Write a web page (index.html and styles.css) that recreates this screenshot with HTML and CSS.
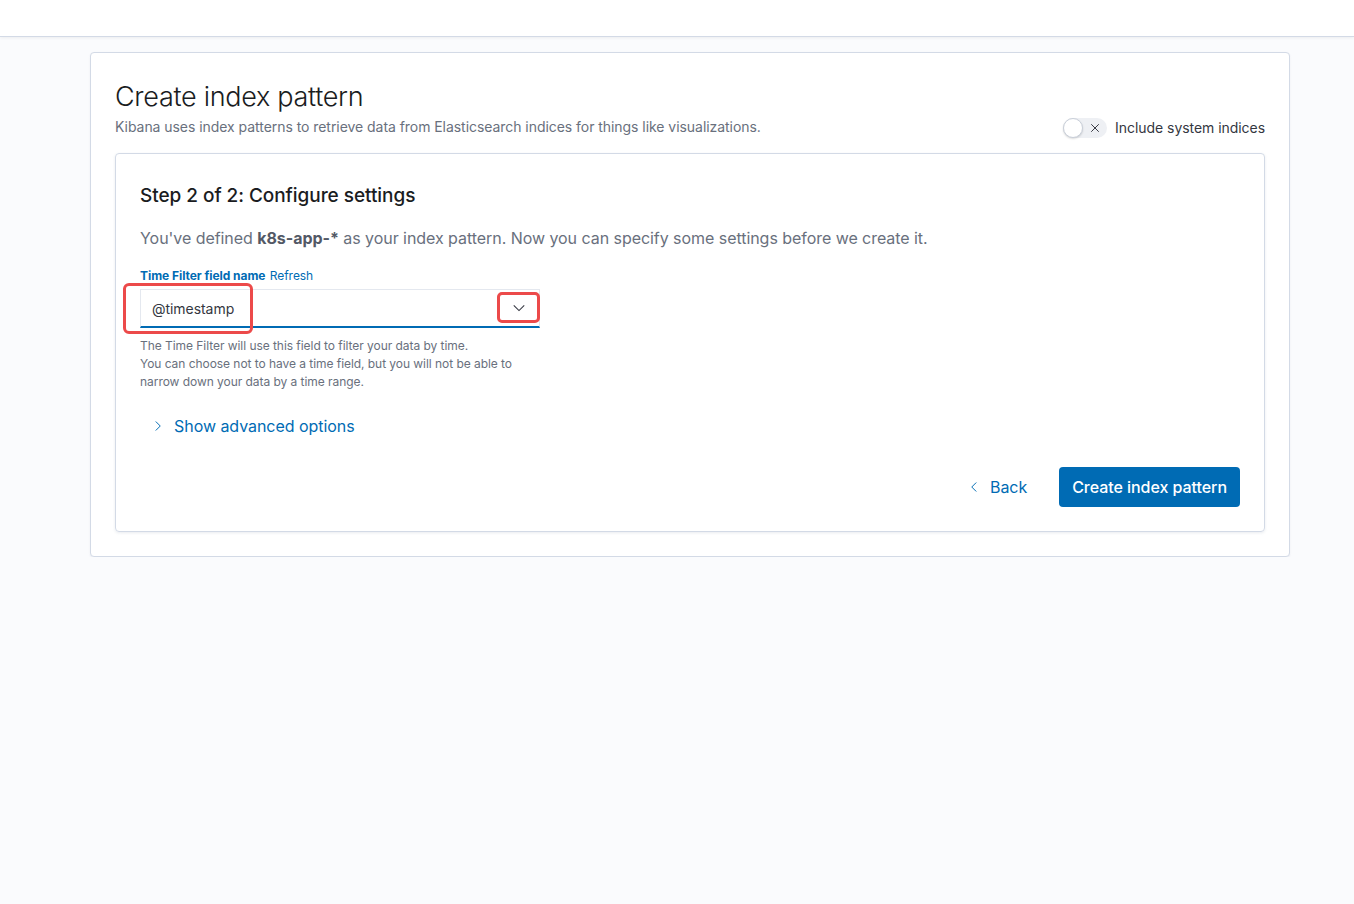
FILE: index.html
```html
<!DOCTYPE html>
<html lang="en">

<head>
    <meta charset="UTF-8">
    <meta name="viewport" content="width=device-width, initial-scale=1.0">
    <title>Create index pattern</title>
    <link rel="stylesheet" href="styles.css">
</head>

<body>

    <header class="topBar"></header>

    <main class="page">
        <section class="panel">
            <div class="panelHeader">
                <div>
                    <h1>Create index pattern</h1>
                    <p class="subtitle">Kibana uses index patterns to retrieve data from Elasticsearch indices for things like visualizations.</p>
                </div>
                <label class="switch">
                    <span class="switchTrack">
                        <span class="switchKnob"></span>
                        <svg class="switchIcon" width="12" height="12" viewBox="0 0 16 16">
                            <path d="M3 3l10 10M13 3L3 13" stroke="#343741" stroke-width="1.3" fill="none" />
                        </svg>
                    </span>
                    <span class="switchLabel">Include system indices</span>
                </label>
            </div>

            <div class="stepPanel">
                <h2>Step 2 of 2: Configure settings</h2>
                <p class="intro">You've defined <strong>k8s-app-*</strong> as your index pattern. Now you can specify some settings before we create it.</p>

                <div class="formRow">
                    <div class="labelRow">
                        <span class="fieldLabel">Time Filter field name</span>
                        <a class="refreshLink">Refresh</a>
                    </div>
                    <div class="selectBox">
                        <span class="selectValue">@timestamp</span>
                        <svg class="selectArrow" width="14" height="14" viewBox="0 0 16 16">
                            <path d="M2 5l6 6 6-6" stroke="#343741" stroke-width="1.2" fill="none" />
                        </svg>
                        <span class="markValue"></span>
                        <span class="markArrow"></span>
                    </div>
                    <div class="helpText">
                        The Time Filter will use this field to filter your data by time.<br>
                        You can choose not to have a time field, but you will not be able to<br>
                        narrow down your data by a time range.
                    </div>
                </div>

                <a class="advanced">
                    <svg width="12" height="12" viewBox="0 0 16 16">
                        <path d="M5 2l6 6-6 6" stroke="#006bb4" stroke-width="1.3" fill="none" />
                    </svg>
                    <span>Show advanced options</span>
                </a>

                <div class="actions">
                    <a class="backLink">
                        <svg width="12" height="12" viewBox="0 0 16 16">
                            <path d="M11 2L5 8l6 6" stroke="#006bb4" stroke-width="1.3" fill="none" />
                        </svg>
                        <span>Back</span>
                    </a>
                    <button class="primaryBtn">Create index pattern</button>
                </div>
            </div>
        </section>
    </main>

</body>

</html>
```

FILE: styles.css
```css
body {
    margin: 0;
    background-color: #fafbfd;
    font-family: Inter, "Noto Sans", sans-serif;
    color: #343741;
    letter-spacing: -0.05px;
}

.topBar {
    height: 36px;
    background-color: #fff;
    border-bottom: 1px solid #d3dae6;
    box-shadow: 0 1px 3px rgba(0, 0, 0, 0.06);
}

.page {
    padding: 15px 64px 0 90px;
}

.panel {
    width: 1200px;
    box-sizing: border-box;
    background-color: #fff;
    border: 1px solid #d3dae6;
    border-radius: 4px;
    box-shadow: 0 1px 2px rgba(152, 162, 179, 0.15);
    padding: 24px;
}

.panelHeader {
    display: flex;
    justify-content: space-between;
    align-items: flex-end;
    margin-bottom: 16px;
}

h1 {
    margin: 0;
    font-size: 27px;
    font-weight: 300;
    line-height: 40px;
    color: #1a1c21;
    letter-spacing: -0.3px;
}

.subtitle {
    margin: 0;
    font-size: 14px;
    line-height: 20px;
    color: #69707d;
}

.switch {
    display: flex;
    align-items: center;
    gap: 8px;
    margin-bottom: -1px;
}

.switchTrack {
    display: flex;
    align-items: center;
    width: 44px;
    height: 20px;
    background-color: #eef0f4;
    border-radius: 10px;
}

.switchKnob {
    width: 18px;
    height: 18px;
    border-radius: 50%;
    background-color: #fff;
    border: 1px solid #c9cfd9;
    box-shadow: 0 1px 2px rgba(0, 0, 0, 0.15);
}

.switchIcon {
    margin-left: 6px;
}

.switchLabel {
    font-size: 14px;
    line-height: 20px;
    color: #343741;
}

.stepPanel {
    border: 1px solid #d3dae6;
    border-radius: 4px;
    box-shadow: 0 1px 3px rgba(152, 162, 179, 0.2);
    padding: 25px 24px 24px 24px;
}

h2 {
    margin: 0 0 13px 0;
    font-size: 19px;
    font-weight: 500;
    line-height: 34px;
    color: #1a1c21;
}

.intro {
    margin: 0 0 17px 0;
    font-size: 16px;
    line-height: 24px;
    color: #69707d;
}

.intro strong {
    color: #535966;
    font-weight: 700;
}

.formRow {
    width: 400px;
}

.labelRow {
    font-size: 12px;
    line-height: 18px;
    margin-bottom: 4px;
}

.fieldLabel {
    font-weight: 700;
    color: #006bb4;
}

.refreshLink {
    color: #006bb4;
    margin-left: 1px;
}

.selectBox {
    position: relative;
    height: 36px;
    border: 1px solid #e4e8ef;
    border-bottom: 2px solid #006bb4;
    display: flex;
    align-items: center;
    justify-content: space-between;
    padding: 0 13px 0 11px;
    background-color: #fff;
    margin-bottom: 16px;
}

.selectValue {
    font-size: 14px;
    color: #343741;
}

.markValue {
    position: absolute;
    left: -18px;
    top: -7px;
    width: 124px;
    height: 45px;
    border: 3px solid #ec4a4a;
    border-radius: 6px;
}

.markArrow {
    position: absolute;
    right: -1px;
    top: 2px;
    width: 37px;
    height: 25px;
    border: 3px solid #ec4a4a;
    border-radius: 5px;
}

.helpText {
    margin-top: -7px;
    font-size: 12px;
    line-height: 18px;
    color: #69707d;
}

.advanced {
    display: flex;
    align-items: center;
    gap: 10px;
    margin: 23px 0 0 12px;
    font-size: 16px;
    line-height: 24px;
    color: #006bb4;
}

.actions {
    display: flex;
    justify-content: flex-end;
    align-items: center;
    gap: 32px;
    margin-top: 29px;
}

.backLink {
    display: flex;
    align-items: center;
    gap: 10px;
    font-size: 16px;
    color: #006bb4;
}

.primaryBtn {
    height: 40px;
    padding: 0 13px;
    border: none;
    border-radius: 4px;
    background-color: #006bb4;
    color: #fff;
    font-family: Inter, "Noto Sans", sans-serif;
    font-size: 16px;
    font-weight: 500;
    letter-spacing: -0.05px;
}
```
